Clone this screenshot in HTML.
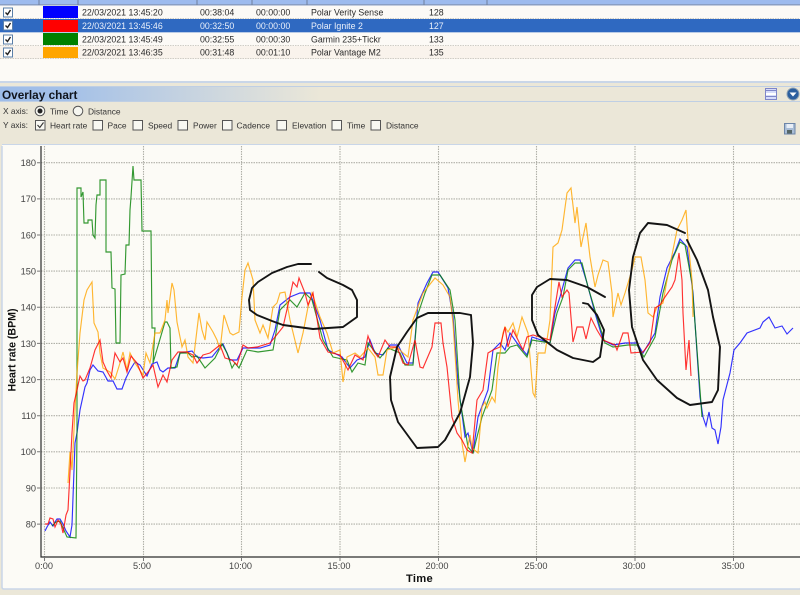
<!DOCTYPE html>
<html><head><meta charset="utf-8"><title>Overlay chart</title>
<style>
html,body{margin:0;padding:0;background:#ebe7d8;overflow:hidden}
svg{display:block;filter:blur(.35px)}
text{font-family:"Liberation Sans",sans-serif;font-size:8.8px;fill:#2a2a2a}
.o text,text.o{font-size:8.4px;fill:#333}
.g{fill:none;stroke:#b0b0a8;stroke-width:1.1;stroke-dasharray:1.5 1}
.s{fill:none;stroke-width:1.15;stroke-linejoin:miter;opacity:.8}
.k{fill:none;stroke:#141414;stroke-width:1.9;stroke-linejoin:round;stroke-linecap:round}
.ax text{font-size:9.2px;fill:#444}
</style></head><body>
<svg width="800" height="595" viewBox="0 0 800 595" xmlns="http://www.w3.org/2000/svg">
<defs><linearGradient id="tb" x1="0" x2="1" y1="0" y2="0"><stop offset="0" stop-color="#9dbce8"/><stop offset=".08" stop-color="#a3c0e8"/><stop offset=".4" stop-color="#ebe7d8"/><stop offset="1" stop-color="#ebe7d8"/></linearGradient></defs>
<rect width="800" height="595" fill="#ebe7d8"/>
<!-- table -->
<rect x="0" y="0" width="800" height="82" fill="#fcfaf6"/>
<rect x="0" y="0" width="800" height="4" fill="#9dbbee"/>
<rect x="0" y="4" width="800" height="1.5" fill="#8a9fc4"/>
<g stroke="#6f7f9c" stroke-width="1"><path d="M39 0V5M78 0V5M197 0V5M252 0V5M307 0V5M424 0V5M487 0V5"/></g>
<rect x="0" y="46" width="800" height="13" fill="#f9f3ec"/>
<rect x="0" y="19" width="800" height="13" fill="#2f69c1"/>
<path d="M0 18.5H800M0 45.5H800M0 58.5H800" stroke="#cfcdc6" stroke-dasharray="1.5 1"/>
<path d="M0 32.5H800" stroke="#b9cbe6"/>
<rect x="43" y="6" width="35" height="12" fill="#0000ff"/>
<rect x="43" y="20" width="35" height="12" fill="#ff0000"/>
<rect x="43" y="33" width="35" height="12" fill="#008000"/>
<rect x="43" y="47" width="35" height="11" fill="#ffa500"/>
<g fill="#fff" stroke="#5a7fa8"><rect x="3.5" y="8" width="9" height="9"/><rect x="3.5" y="21" width="9" height="9"/><rect x="3.5" y="35" width="9" height="9"/><rect x="3.5" y="48" width="9" height="9"/></g>
<g fill="none" stroke="#222" stroke-width="1.4"><path d="M5.5 12.5l2 2 3-4.500"/><path d="M5.500 25.500l2 2 3-4.500"/><path d="M5.500 39.500l2 2 3-4.500"/><path d="M5.500 52.500l2 2 3-4.500"/></g>
<g>
<text x="82" y="15.500">22/03/2021 13:45:20</text><text x="200" y="15.500">00:38:04</text><text x="256" y="15.500">00:00:00</text><text x="311" y="15.500">Polar Verity Sense</text><text x="429" y="15.500">128</text>
<text x="82" y="29" style="fill:#eaf0fa">22/03/2021 13:45:46</text><text x="200" y="29" style="fill:#eaf0fa">00:32:50</text><text x="256" y="29" style="fill:#eaf0fa">00:00:00</text><text x="311" y="29" style="fill:#eaf0fa">Polar Ignite 2</text><text x="429" y="29" style="fill:#eaf0fa">127</text>
<text x="82" y="42.500">22/03/2021 13:45:49</text><text x="200" y="42.500">00:32:55</text><text x="256" y="42.500">00:00:30</text><text x="311" y="42.500">Garmin 235+Tickr</text><text x="429" y="42.500">133</text>
<text x="82" y="55.500">22/03/2021 13:46:35</text><text x="200" y="55.500">00:31:48</text><text x="256" y="55.500">00:01:10</text><text x="311" y="55.500">Polar Vantage M2</text><text x="429" y="55.500">135</text>
</g>
<rect x="0" y="81" width="800" height="2" fill="#c9d6e8"/>
<!-- title bar -->
<rect x="0" y="86" width="800" height="16" fill="url(#tb)"/>
<path d="M0 86.500H800M0 101.500H800" stroke="#bfcfe4"/>
<text x="2" y="99" style="font-size:11.800px;font-weight:bold;fill:#10141c">Overlay chart</text>
<rect x="765.500" y="88.500" width="11" height="11" fill="#d6dcfa" stroke="#7f86c8"/><rect x="766" y="93" width="10" height="2" fill="#fff"/><path d="M766 90.500H776M766 96.500H776" stroke="#7f86c8"/>
<circle cx="793" cy="94" r="6" fill="#2c5f9e" stroke="#8fa2b4"/><path d="M789.500 92.500H796.500L793 96.500Z" fill="#fff"/>
<!-- options -->
<g class="o">
<text x="3" y="114">X axis:</text>
<text x="50" y="114.500">Time</text>
<text x="88" y="114.500">Distance</text>
<text x="3" y="128">Y axis:</text>
<text x="50" y="128.500">Heart rate</text><text x="107.500" y="128.500">Pace</text><text x="148" y="128.500">Speed</text><text x="193" y="128.500">Power</text><text x="236.500" y="128.500">Cadence</text><text x="292" y="128.500">Elevation</text><text x="347" y="128.500">Time</text><text x="386" y="128.500">Distance</text>
</g>
<circle cx="40" cy="111" r="4.800" fill="#f6f6f0" stroke="#555"/><circle cx="40" cy="111" r="2.500" fill="#222"/>
<circle cx="78" cy="111" r="4.800" fill="#f6f6f0" stroke="#555"/>
<g fill="#f8f8f2" stroke="#555"><rect x="35.500" y="120.500" width="9.500" height="9.500"/><rect x="93" y="120.500" width="9.500" height="9.500"/><rect x="133" y="120.500" width="9.500" height="9.500"/><rect x="178" y="120.500" width="9.500" height="9.500"/><rect x="222.500" y="120.500" width="9.500" height="9.500"/><rect x="277" y="120.500" width="9.500" height="9.500"/><rect x="332" y="120.500" width="9.500" height="9.500"/><rect x="371" y="120.500" width="9.500" height="9.500"/></g>
<path d="M37.500 125l2.300 2.500 3.700-5" fill="none" stroke="#333" stroke-width="1.100"/>
<rect x="784.500" y="123.500" width="10.500" height="10.500" fill="#a9bdd6" stroke="#6d86a8"/><rect x="786.500" y="124" width="6.500" height="4" fill="#e8eef6"/><rect x="787" y="130" width="5" height="3.500" fill="#566"/>
<!-- chart panel -->
<rect x="2" y="144" width="798" height="445" rx="2" fill="#fcfbf6"/>
<path d="M2 144.500H800" stroke="#c9d6e8"/><path d="M2 146V587q0 2 2 2H800" fill="none" stroke="#c9d6e8" stroke-width="1.500"/>
<rect x="0" y="591" width="800" height="4" fill="#ebe7d8"/>
<path class="g" d="M41 162.700H800M41 198.900H800M41 235H800M41 271.100H800M41 307.300H800M41 343.400H800M41 379.600H800M41 415.700H800M41 451.800H800M41 488H800M41 524.100H800"/>
<path class="g" d="M143.500 146V557M241.500 146V557M340 146V557M438.500 146V557M536.500 146V557M635 146V557M733.500 146V557"/>
<path d="M44.500 146V560" class="g"/>
<path d="M41 146V557H800" fill="none" stroke="#2c2c2c" stroke-width="1.200"/>
<path d="M37 162.700H41M37 198.900H41M37 235H41M37 271.100H41M37 307.300H41M37 343.400H41M37 379.600H41M37 415.700H41M37 451.800H41M37 488H41M37 524.100H41M44.500 557V561M143.500 557V561M241.500 557V561M340 557V561M438.500 557V561M536.500 557V561M635 557V561M733.500 557V561" stroke="#777" fill="none"/>
<g class="ax" text-anchor="end">
<text x="36" y="166">180</text><text x="36" y="202">170</text><text x="36" y="238.500">160</text><text x="36" y="274.500">150</text><text x="36" y="310.500">140</text><text x="36" y="347">130</text><text x="36" y="383">120</text><text x="36" y="419">110</text><text x="36" y="455">100</text><text x="36" y="491.500">90</text><text x="36" y="527.500">80</text>
</g>
<g class="ax" text-anchor="middle">
<text x="44" y="569">0:00</text><text x="142" y="569">5:00</text><text x="240.500" y="569">10:00</text><text x="339" y="569">15:00</text><text x="437" y="569">20:00</text><text x="536" y="569">25:00</text><text x="634" y="569">30:00</text><text x="733" y="569">35:00</text>
</g>
<text x="419.500" y="582" text-anchor="middle" style="font-size:11.200px;font-weight:bold;fill:#111;letter-spacing:.3px">Time</text>
<text transform="translate(15.500 350) rotate(-90)" text-anchor="middle" style="font-size:10.600px;font-weight:bold;fill:#111">Heart rate (BPM)</text>
<!-- blue -->
<polyline class="s" stroke="#0000ff" points="45,531 47,527 50,522 53,526 55,522 57,519 60,519 63,524 66,531 70,537 72,525 75,443 77,433 80,410 85,387 87,383 90,370 93,365 98,371 103,372 108,381 113,381 117,389 122,389 126,378 130,370 135,362 140,365 147,376 152,364 157,362 160,370 163,372 168,368 175,368 180,353 192,351 197,357 203,358 212,357 220,347 223,344 230,360 237,360 243,348 260,348 270,345 275,330 280,305 290,297 300,293 310,293 320,320 328,350 342,357 350,368 357,360 365,357 370,340 375,353 383,355 390,345 398,345 407,363 413,363 418,303 427,283 433,272 438,272 448,288 453,317 458,383 465,437 468,433 473,453 478,417 488,390 493,350 500,343 505,350 510,333 517,343 527,355 532,337 550,343 555,313 560,297 568,268 575,260 580,260 587,283 595,313 603,340 613,345 625,343 637,343 643,353 655,333 660,297 667,268 675,252 680,239 687,247 693,293 700,397 703,417 706,426 709,412 712,428 715,430 718,444 721,427 723,400 730,373 734,350 740,343 747,333 760,328 763,322 769,317 775,328 782,326 787,334 793,328"/>
<!-- green -->
<polyline class="s" stroke="#008000" points="52,526 56,522 60,521 63,528 67,537 76,538 77,430 77,188 81,188 81,197 83,192 84,223 88,223 88,220 92,220 93,235 95,238 96,205 97,195 100,195 100,180 106,180 106,252 111,252 112,288 115,289 116,343 120,343 121,275 125,274 126,245 129,245 130,210 131,197 133,166 134,180 141,180 142,231 151,231 152,328 155,328 153,363 165,322 167,322 170,328 171,368 177,367 180,353 188,353 192,357 197,356 205,368 215,358 222,344 227,353 232,368 235,363 239,368 247,350 258,352 273,350 280,310 290,300 297,307 305,293 312,300 323,340 333,357 347,360 352,372 358,363 365,365 368,343 380,358 388,348 400,353 405,365 413,365 417,317 425,293 432,275 440,275 450,290 455,320 460,400 468,447 473,453 482,417 492,390 497,353 505,353 510,347 517,345 527,357 532,340 550,343 557,313 563,297 568,270 575,263 582,263 588,287 597,317 605,343 613,347 628,345 637,345 644,357 655,337 663,293 672,260 680,242 685,245 692,283 702,417"/>
<!-- orange -->
<polyline class="s" stroke="#ffa500" points="68,483 70,452 72,470 75,410 77,373 80,333 84,300 87,290 92,282 94,323 98,332 100,353 103,368 110,372 115,379 120,363 123,352 127,370 130,353 135,363 143,375 146,353 150,363 155,333 160,333 165,320 167,300 168,313 172,283 174,290 177,322 182,347 185,340 188,357 193,363 199,313 202,330 205,340 207,322 213,332 217,340 220,350 224,315 230,333 233,335 239,332 242,297 245,270 248,263 253,280 255,320 260,333 263,325 268,338 273,307 277,303 280,293 285,292 290,320 298,353 303,333 308,307 312,293 320,317 327,333 333,353 340,350 343,382 347,357 355,353 360,357 368,348 375,357 378,375 383,375 387,350 397,347 403,353 408,357 413,320 423,293 435,278 443,285 450,297 453,323 458,400 462,443 465,462 470,435 472,448 478,453 482,407 485,402 487,408 492,397 495,402 498,367 503,333 505,327 508,332 513,323 517,337 522,317 528,333 533,393 535,397 538,353 545,353 550,320 553,247 558,243 562,230 567,193 571,188 575,223 577,207 581,247 586,223 590,257 595,287 598,275 603,260 608,262 612,293 613,317 618,293 621,305 625,293 632,270 635,257 641,257 645,280 648,313 653,317 657,307 663,303 667,280 677,230 682,220 686,210 688,240 692,280 693,317"/>
<!-- red -->
<polyline class="s" stroke="#ff0000" points="45,524 48,524 50,518 53,519 55,527 58,520 61,524 63,533 66,515 68,510 72,433 74,403 77,390 80,376 83,381 85,380 90,368 95,350 100,340 103,362 107,371 111,378 115,353 120,362 123,358 127,372 131,356 137,363 143,378 148,372 153,365 158,387 163,375 167,382 172,360 178,352 187,352 193,355 197,363 203,355 210,353 220,345 225,358 232,360 237,365 243,345 248,348 257,347 270,343 275,337 283,327 288,305 293,282 297,287 299,278 305,293 308,305 313,293 320,338 328,352 340,355 348,370 355,355 363,360 368,336 373,350 378,357 385,340 390,347 397,347 403,363 408,365 415,340 420,367 423,368 432,347 435,323 441,323 443,343 447,367 452,417 457,433 462,440 467,450 472,453 477,400 483,390 488,353 493,350 500,347 505,327 508,347 513,330 523,350 527,337 533,335 550,340 555,307 559,282 562,297 567,290 569,293 573,342 577,327 583,327 586,339 591,318 597,330 603,340 615,345 617,350 623,333 628,333 631,353 643,352 650,343 655,308 660,305 665,297 672,287 675,280 679,253 682,280 683,313 686,370 689,340 691,376"/>
<!-- black scribbles -->
<polyline class="k" points="311,264 298,264 287,267 272,273 258,282 252,288 249,300 250,310 257,315 272,321 283,325 313,329 343,327 357,317 357,300 352,290 343,285 327,278 319,272"/>
<polyline class="k" points="471,315 460,313 428,313 417,318 407,332 397,347 390,377 391,400 398,422 417,448 438,447 445,440 460,413 470,377 473,343 471,315"/>
<polyline class="k" points="605,297 587,287 567,280 550,279 537,287 532,295 532,320 538,335 557,350 573,358 593,362 600,357 604,330 597,315 588,304 583,303"/>
<polyline class="k" points="685,233 667,225 648,223 640,233 633,257 629,290 632,327 643,360 657,380 677,398 690,405 712,402 718,390 720,347 713,317 708,290 697,260 687,240"/>
</svg>
</body></html>
